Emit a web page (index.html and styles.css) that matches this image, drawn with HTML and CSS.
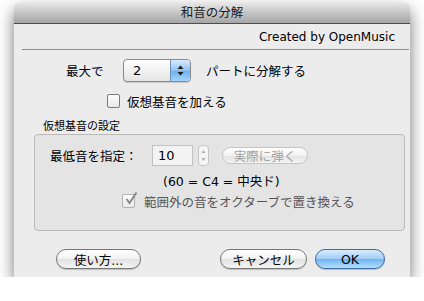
FILE: index.html
```html
<!DOCTYPE html>
<html lang="ja">
<head>
  <meta charset="UTF-8">
  <title>和音の分解</title>
  <link rel="stylesheet" href="styles.css">
</head>
<body>
  <div class="window">
    <div class="titlebar">和音の分解</div>
    <div class="content">
      <div class="credit">Created by OpenMusic</div>
      <div class="separator"></div>

      <div class="row parts-row">
        <span class="lead">最大で</span>
        <div class="popup">
          <span class="popup-value">2</span>
          <span class="popup-arrows">
            <svg width="7" height="11" viewBox="0 0 7 11"><path d="M3.5 0.5 L6.5 4 L0.5 4 Z M0.5 7 L6.5 7 L3.5 10.5 Z" fill="#1c1c1c"/></svg>
          </span>
        </div>
        <span class="after-popup">パートに分解する</span>
      </div>

      <label class="row check-row">
        <span class="checkbox"></span>
        <span>仮想基音を加える</span>
      </label>

      <div class="group-title">仮想基音の設定</div>
      <div class="group">
        <div class="row low-row">
          <span class="lead">最低音を指定：</span>
          <span class="field">10</span>
          <span class="stepper">
            <svg width="7" height="15" viewBox="0 0 7 15"><path d="M3.5 2 L5.5 5 L1.5 5 Z M1.5 10 L5.5 10 L3.5 13 Z" fill="#b0b0b0"/></svg>
          </span>
          <span class="btn small disabled">実際に弾く</span>
        </div>
        <div class="note">(60 = C4 = 中央ド)</div>
        <label class="row octave-row">
          <span class="checkbox checked disabled">
            <svg width="14" height="14" viewBox="0 0 14 14"><path d="M2.5 7 L5.5 11 L12.5 0.5" fill="none" stroke="#8a8a8a" stroke-width="2"/></svg>
          </span>
          <span class="muted-label">範囲外の音をオクターブで置き換える</span>
        </label>
      </div>

      <div class="buttons">
        <span class="btn help">使い方...</span>
        <span class="spacer"></span>
        <span class="btn cancel">キャンセル</span>
        <span class="btn default">OK</span>
      </div>
    </div>
  </div>
</body>
</html>
```

FILE: styles.css
```css
/* Dialog window */
body {
  margin: 0;
  background: #ffffff;
  font-family: "DejaVu Sans", "Noto Sans CJK JP", sans-serif;
  font-size: 12.5px;
  color: #000;
}
.window {
  margin: 3px 0 0 14px;
  width: 396px;
  height: 274px;
  border-radius: 5px 5px 0 0;
  box-shadow: 0 7px 16px rgba(0, 0, 0, 0.55);
  overflow: hidden;
  background: #ececec;
}
.titlebar {
  height: 20px;
  line-height: 20px;
  text-align: center;
  font-size: 12.5px;
  color: #1a1a1a;
  background: linear-gradient(#e6e6e6, #c4c4c4 50%, #a6a6a6);
  border-bottom: 1px solid #4d4d4d;
}
.content {
  padding-top: 5px;
}
.credit {
  text-align: right;
  padding-right: 15px;
  line-height: 16px;
  font-size: 12px;
}
.separator {
  margin: 4px 1px 0 8px;
  border-top: 1px solid #8e8e8e;
}
.row {
  display: flex;
  align-items: center;
}

/* top rows */
.parts-row {
  margin-top: 9px;
  padding-left: 52px;
  height: 23px;
}
.parts-row .lead {
  width: 57px;
}
.after-popup {
  margin-left: 15px;
}
.popup {
  display: flex;
  width: 66px;
  height: 21px;
  border: 1px solid #8a8a8a;
  border-radius: 4px;
  background: linear-gradient(#ffffff, #f1f1f1 50%, #e4e4e4);
  overflow: hidden;
  box-shadow: 0 1px 1px rgba(0, 0, 0, 0.15);
}
.popup-value {
  flex: 1;
  padding-left: 9px;
  line-height: 21px;
  font-size: 13px;
}
.popup-arrows {
  width: 19px;
  display: flex;
  align-items: center;
  justify-content: center;
  border-left: 1px solid #6f8fb8;
  background: linear-gradient(#d6ebfc, #8fc3f3 50%, #6aaef0 51%, #a6d6fb);
}
.check-row {
  margin-top: 11px;
  padding-left: 93px;
  height: 16px;
}
.checkbox {
  position: relative;
  width: 11px;
  height: 12px;
  margin-right: 7px;
  border: 1px solid #7b7b7b;
  border-radius: 2px;
  background: linear-gradient(#fdfdfd, #e9e9e9);
}
.checkbox.disabled {
  border-color: #b3b3b3;
}
.checkbox svg {
  position: absolute;
  left: 1px;
  top: -3px;
}

/* group box */
.group-title {
  margin: 11px 0 0 29px;
  font-size: 11px;
  line-height: 14px;
}
.group {
  margin: 0 5px 0 20px;
  height: 95px;
  border: 1px solid #b9b9b9;
  border-radius: 4px;
  background: #e4e4e4;
}
.low-row {
  margin-top: 10px;
  padding-left: 15px;
  height: 21px;
}
.low-row .lead {
  width: 102px;
}
.field {
  width: 34px;
  height: 19px;
  line-height: 19px;
  padding-left: 5px;
  border: 1px solid #c2c2c2;
  background: #f3f3f3;
  font-size: 13px;
}
.stepper {
  margin-left: 5px;
  width: 9px;
  height: 19px;
  border: 1px solid #c6c6c6;
  border-radius: 4px;
  background: #f6f6f6;
  display: flex;
  align-items: center;
  justify-content: center;
}
.note {
  margin: 8px 0 0 128px;
  line-height: 16px;
}
.octave-row {
  margin-top: 3px;
  padding-left: 87px;
  height: 16px;
}
.muted-label {
  color: #555;
  margin-left: 2px;
}

/* push buttons */
.btn {
  display: inline-flex;
  align-items: center;
  justify-content: center;
  height: 18px;
  border: 1px solid #777;
  border-radius: 10px;
  background: linear-gradient(#ffffff, #f2f2f2 50%, #e2e2e2 51%, #f4f4f4);
  box-shadow: 0 1px 1px rgba(0, 0, 0, 0.2);
}
.btn.small {
  margin-left: 13px;
  width: 84px;
  height: 15px;
}
.btn.disabled {
  color: #a2a2a2;
  border-color: #c4c4c4;
  box-shadow: none;
}
.buttons {
  display: flex;
  align-items: center;
  margin-top: 18px;
  padding: 0 25px 0 42px;
}
.spacer {
  flex: 1;
}
.help {
  width: 83px;
}
.cancel {
  width: 85px;
  margin-right: 8px;
}
.default {
  width: 68px;
  border-color: #3d6aa3;
  background: linear-gradient(#d7ecfd, #9fcdf6 50%, #6db2f0 51%, #b5e0fd);
}
```
